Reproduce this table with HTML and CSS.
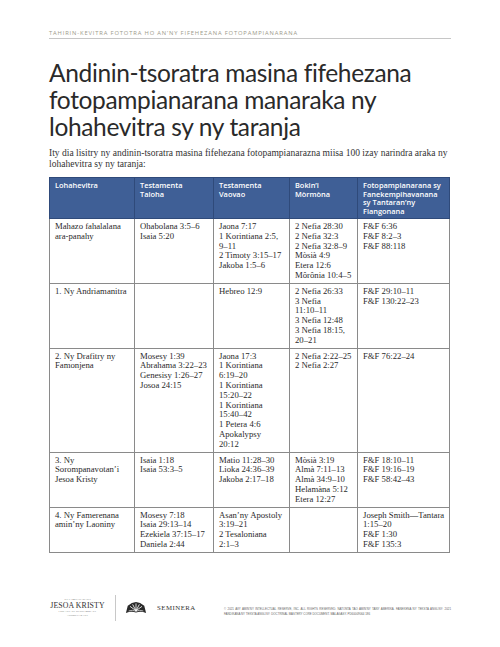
FILE: index.html
```html
<!DOCTYPE html>
<html lang="mg">
<head>
<meta charset="utf-8">
<title>Andinin-tsoratra masina fifehezana</title>
<link rel="stylesheet" href="styles.css">
</head>
<body>
<div class="page">
  <header class="running-head">TAHIRIN-KEVITRA FOTOTRA HO AN’NY FIFEHEZANA FOTOPAMPIANARANA</header>
  <h1 class="title">Andinin-tsoratra masina fifehezana<br>fotopampianarana manaraka ny<br>lohahevitra sy ny taranja</h1>
  <p class="intro">Ity dia lisitry ny andinin-tsoratra masina fifehezana fotopampianarazna miisa 100 izay narindra araka ny<br>lohahevitra sy ny taranja:</p>
  <table class="refs">
    <thead>
      <tr>
        <th class="c1">Lohahevitra</th>
        <th class="c2">Testamenta<br>Taloha</th>
        <th class="c3">Testamenta<br>Vaovao</th>
        <th class="c4">Bokin’i<br>Mòrmòna</th>
        <th class="c5">Fotopampianarana sy<br>Fanekempihavanana<br>sy Tantaran’ny<br>Fiangonana</th>
      </tr>
    </thead>
    <tbody>
      <tr>
        <td>Mahazo fahalalana<br>ara-panahy</td>
        <td>Ohabolana 3:5–6<br>Isaia 5:20</td>
        <td>Jaona 7:17<br>1 Korintiana 2:5,<br>9–11<br>2 Timoty 3:15–17<br>Jakoba 1:5–6</td>
        <td>2 Nefia 28:30<br>2 Nefia 32:3<br>2 Nefia 32:8–9<br>Mòsià 4:9<br>Etera 12:6<br>Môrônia 10:4–5</td>
        <td>F&amp;F 6:36<br>F&amp;F 8:2–3<br>F&amp;F 88:118</td>
      </tr>
      <tr>
        <td>1. Ny Andriamanitra</td>
        <td></td>
        <td>Hebreo 12:9</td>
        <td>2 Nefia 26:33<br>3 Nefia<br>11:10–11<br>3 Nefia 12:48<br>3 Nefia 18:15,<br>20–21</td>
        <td>F&amp;F 29:10–11<br>F&amp;F 130:22–23</td>
      </tr>
      <tr>
        <td>2. Ny Drafitry ny<br>Famonjena</td>
        <td>Mosesy 1:39<br>Abrahama 3:22–23<br>Genesisy 1:26–27<br>Josoa 24:15</td>
        <td>Jaona 17:3<br>1 Korintiana<br>6:19–20<br>1 Korintiana<br>15:20–22<br>1 Korintiana<br>15:40–42<br>1 Petera 4:6<br>Apokalypsy<br>20:12</td>
        <td>2 Nefia 2:22–25<br>2 Nefia 2:27</td>
        <td>F&amp;F 76:22–24</td>
      </tr>
      <tr>
        <td>3. Ny<br>Sorompanavotan’i<br>Jesoa Kristy</td>
        <td>Isaia 1:18<br>Isaia 53:3–5</td>
        <td>Matio 11:28–30<br>Lioka 24:36–39<br>Jakoba 2:17–18</td>
        <td>Mòsià 3:19<br>Almà 7:11–13<br>Almà 34:9–10<br>Helamàna 5:12<br>Etera 12:27</td>
        <td>F&amp;F 18:10–11<br>F&amp;F 19:16–19<br>F&amp;F 58:42–43</td>
      </tr>
      <tr>
        <td>4. Ny Famerenana<br>amin’ny Laoniny</td>
        <td>Mosesy 7:18<br>Isaia 29:13–14<br>Ezekiela 37:15–17<br>Daniela 2:44</td>
        <td>Asan’ny Apostoly<br>3:19–21<br>2 Tesaloniana<br>2:1–3</td>
        <td></td>
        <td>Joseph Smith—Tantara<br>1:15–20<br>F&amp;F 1:30<br>F&amp;F 135:3</td>
      </tr>
    </tbody>
  </table>
  <footer class="foot">
    <div class="brand">
      <div class="jk">
        <span class="jk-small">NY FAMPIANARAN’I</span>
        <span class="jk-name">JESOA KRISTY</span>
        <span class="jk-small">LOO ANY NY OLONAMBY NY</span>
        <span class="jk-small">ANDRO FARANY</span>
      </div>
      <div class="divider"></div>
      <div class="sem">
        <svg class="sem-logo" viewBox="0 0 24 14" width="22" height="13" aria-hidden="true">
          <path d="M1 13 L3 5 Q12 -3 21 5 L23 13 Q17 10.5 12 12.5 Q7 10.5 1 13 Z" fill="#2a2a2a"/>
          <g stroke="#fff" stroke-width="0.9" stroke-linecap="round">
            <line x1="12" y1="10.5" x2="12" y2="3"/>
            <line x1="12" y1="10.5" x2="8.5" y2="4"/>
            <line x1="12" y1="10.5" x2="15.5" y2="4"/>
            <line x1="12" y1="10.5" x2="5.8" y2="6"/>
            <line x1="12" y1="10.5" x2="18.2" y2="6"/>
          </g>
          <path d="M4 10.8 Q8 9.2 12 11 Q16 9.2 20 10.8" fill="none" stroke="#fff" stroke-width="0.7"/>
        </svg>
        <span class="sem-name">SEMINERA</span>
      </div>
    </div>
    <p class="copy">© 2021 AVY AMIN’NY INTELLECTUAL RESERVE, INC. ALL RIGHTS RESERVED. NATONTA TAO AMIN’NY TANY AMERIKA. FANEKENA NY TEKSTA ANGLISY: 2021 FANDIKANA NY TEKSTA ANGLISY: DOCTRINAL MASTERY CORE DOCUMENT. MALAGASY. PD60009064 186</p>
  </footer>
</div>
</body>
</html>
```

FILE: styles.css
```css
* { box-sizing: border-box; }

html, body {
  margin: 0;
  padding: 0;
  background: #ffffff;
}

.page {
  width: 500px;
  height: 647px;
  padding: 29px 49px 0 49px;
  font-family: "Liberation Serif", "Times New Roman", serif;
  color: #222;
}

.running-head {
  font-family: "Open Sans", "Noto Sans", sans-serif;
  font-size: 5.8px;
  letter-spacing: 0.85px;
  color: #9c9a8a;
  line-height: 8px;
  padding-bottom: 1px;
  border-bottom: 1px solid #c6c6c6;
  white-space: nowrap;
}

.title {
  margin: 20px 0 0 0;
  font-family: "Lato", "Open Sans", sans-serif;
  font-weight: 400;
  font-size: 24.5px;
  line-height: 27px;
  color: #2a2a2a;
  letter-spacing: -0.35px;
}

.intro {
  margin: 8px 0 0 0;
  font-size: 9.55px;
  line-height: 10.5px;
  color: #333;
  white-space: nowrap;
}

.refs {
  margin-top: 8px;
  width: 400px;
  border-collapse: collapse;
  table-layout: fixed;
}

.refs th, .refs td {
  border: 1px solid #8a8a8a;
  vertical-align: top;
  text-align: left;
  white-space: nowrap;
}

.refs th {
  background: #3f5f96;
  color: #fff;
  font-family: "Open Sans", "Noto Sans", sans-serif;
  font-weight: 600;
  font-size: 7.4px;
  line-height: 8.7px;
  padding: 3px 4px 1px 5px;
  height: 41px;
  border-color: #2f4a7a;
}

.refs td {
  font-size: 8.7px;
  line-height: 9.8px;
  padding: 3px 3px 2px 5px;
  color: #2a2a2a;
}

.c1 { width: 85px; }
.c2 { width: 79px; }
.c3 { width: 76px; }
.c4 { width: 68px; }
.c5 { width: 92px; }

.refs td:nth-child(3),
.refs td:nth-child(4) {
  border-left-color: #666;
}

.foot {
  margin-top: 42px;
  display: flex;
  align-items: center;
  justify-content: space-between;
  height: 26px;
}

.brand {
  display: flex;
  align-items: center;
  gap: 9px;
}

.jk {
  display: flex;
  flex-direction: column;
  align-items: center;
  width: 57px;
  color: #555;
}

.jk-small {
  font-size: 2.6px;
  line-height: 4px;
  letter-spacing: 0.1px;
  white-space: nowrap;
}

.jk-name {
  font-size: 7.8px;
  line-height: 8px;
  color: #333;
  letter-spacing: 0.1px;
  white-space: nowrap;
}

.divider {
  width: 1px;
  height: 26px;
  background: #c8c8c8;
}

.sem {
  display: flex;
  align-items: center;
  gap: 10px;
}

.sem-name {
  font-size: 6.8px;
  letter-spacing: 0.5px;
  color: #333;
}

.copy {
  margin: 8px 0 0 0;
  width: 227px;
  font-family: "Liberation Sans", sans-serif;
  font-size: 2.9px;
  line-height: 4.5px;
  color: #666;
  text-align: justify;
}
```
